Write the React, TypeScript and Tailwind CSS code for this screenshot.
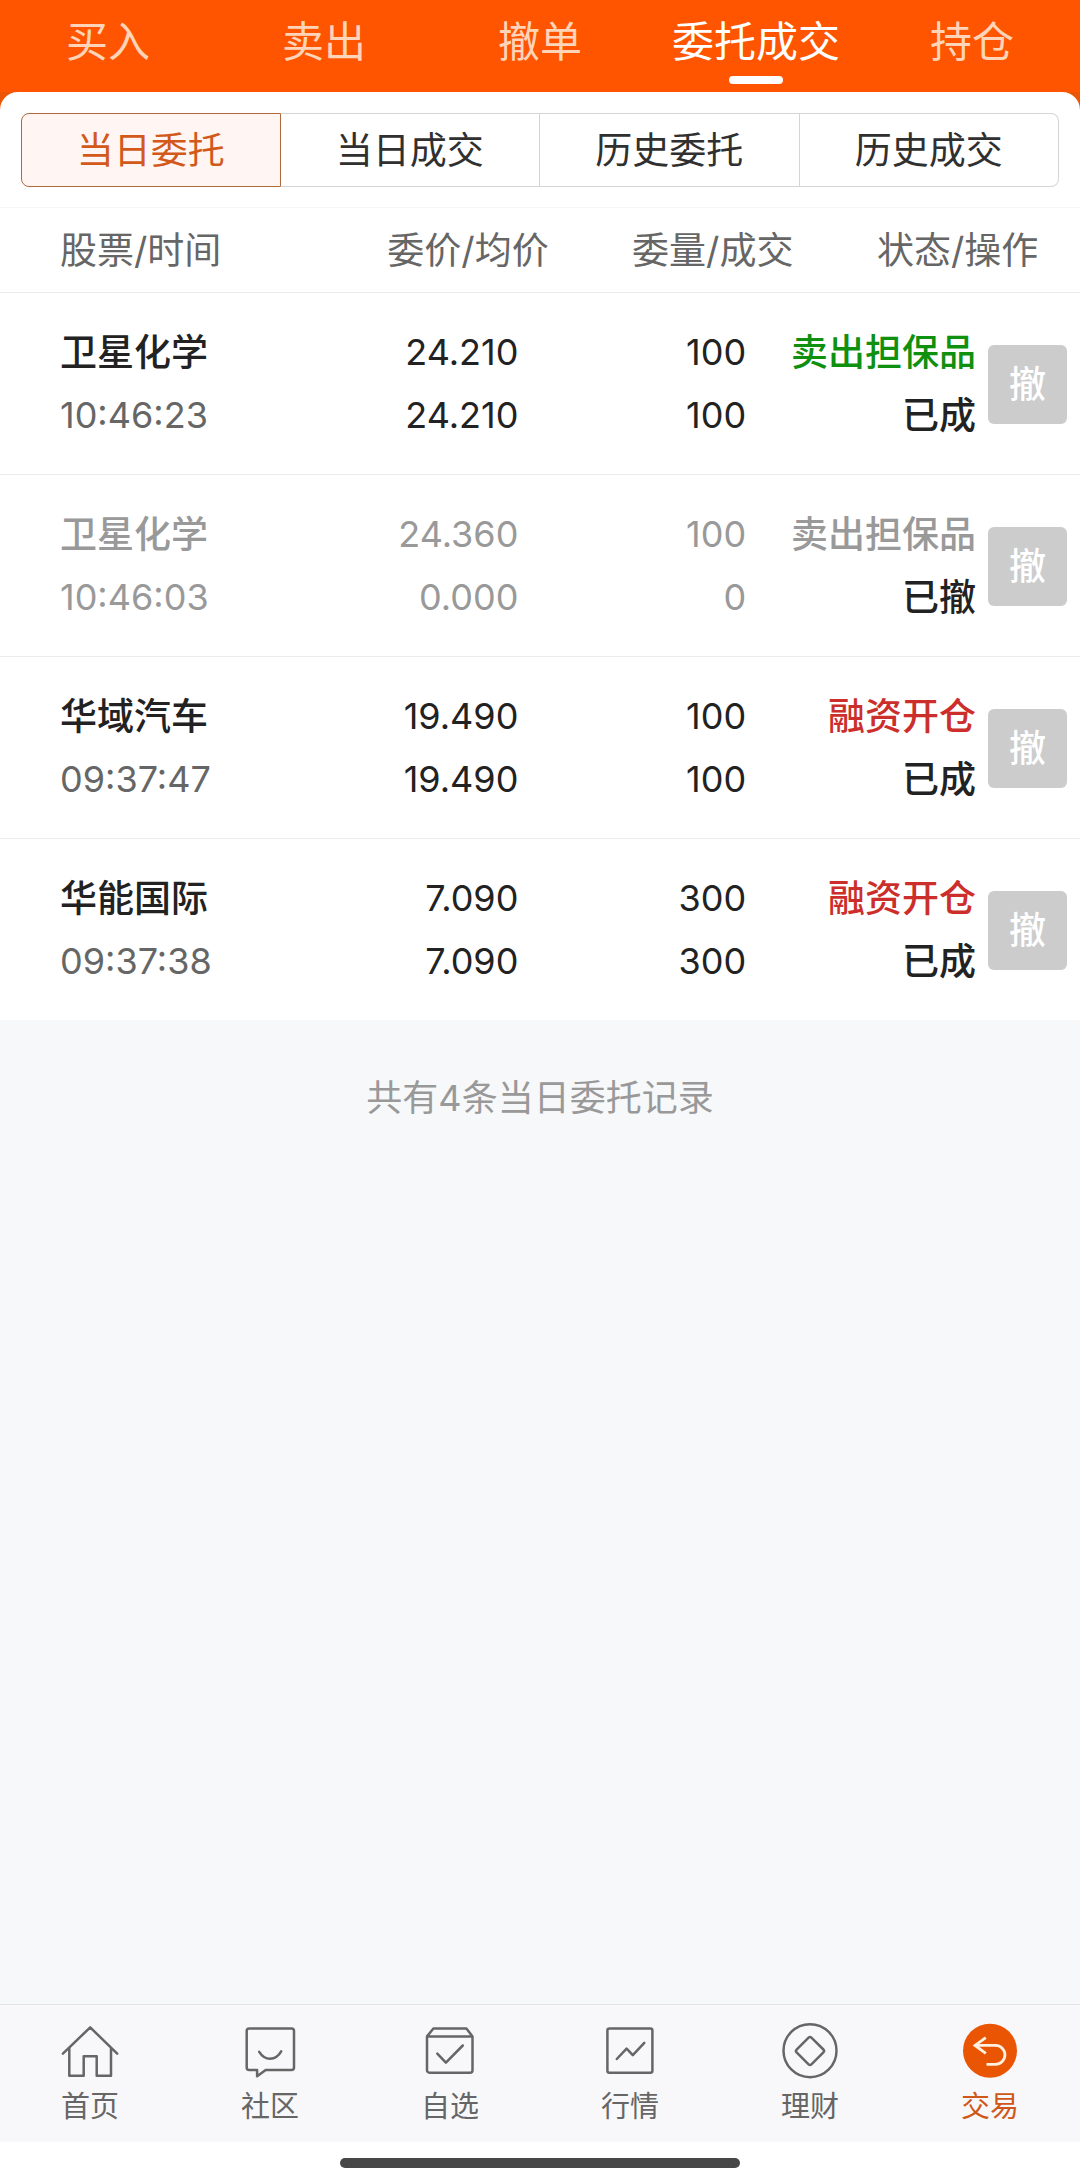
import { useState, type ReactNode } from "react";

const topTabs = ["买入", "卖出", "撤单", "委托成交", "持仓"];
const segments = ["当日委托", "当日成交", "历史委托", "历史成交"];
const columns = ["股票/时间", "委价/均价", "委量/成交", "状态/操作"];

type Order = {
  name: string;
  time: string;
  price: string;
  average: string;
  quantity: string;
  filled: string;
  action: string;
  status: string;
  tone: "sell" | "buy" | "cancelled";
};

const orders: Order[] = [
  { name: "卫星化学", time: "10:46:23", price: "24.210", average: "24.210", quantity: "100", filled: "100", action: "卖出担保品", status: "已成", tone: "sell" },
  { name: "卫星化学", time: "10:46:03", price: "24.360", average: "0.000", quantity: "100", filled: "0", action: "卖出担保品", status: "已撤", tone: "cancelled" },
  { name: "华域汽车", time: "09:37:47", price: "19.490", average: "19.490", quantity: "100", filled: "100", action: "融资开仓", status: "已成", tone: "buy" },
  { name: "华能国际", time: "09:37:38", price: "7.090", average: "7.090", quantity: "300", filled: "300", action: "融资开仓", status: "已成", tone: "buy" },
];

const actionColor = {
  sell: "text-[#0f900f]",
  buy: "text-[#cc2f2b]",
  cancelled: "text-[#999999]",
};

function Icon({ children }: { children: ReactNode }) {
  return (
    <svg viewBox="0 0 60 60" className="size-[60px]" fill="none" stroke="currentColor" strokeWidth="2.5" strokeLinecap="round" strokeLinejoin="round" aria-hidden="true">
      {children}
    </svg>
  );
}

const navItems = [
  {
    label: "首页",
    icon: (
      <Icon>
        <path d="M2.9 32.6 30.2 6.4 57.2 32.6M9.3 27v27.8h14.4V35.3h13v19.5H51V27" />
      </Icon>
    ),
  },
  {
    label: "社区",
    icon: (
      <Icon>
        <path d="M9.2 7.4h42.3a2.5 2.5 0 0 1 2.5 2.5v36.6a2.5 2.5 0 0 1-2.5 2.5H25.7l-8.6 6.2V49H9.2a2.5 2.5 0 0 1-2.5-2.5V9.9a2.5 2.5 0 0 1 2.5-2.5Z" />
        <path d="M19.2 30.8C22 35.3 25.5 37.7 30.1 37.7S38.4 35.3 41.2 30.4" />
      </Icon>
    ),
  },
  {
    label: "自选",
    icon: (
      <Icon>
        <path d="M7 15.4 13.4 7.5h33l6.1 7.9v33.8a2.5 2.5 0 0 1-2.5 2.5H9.5A2.5 2.5 0 0 1 7 49.2ZM7 15.4h45.5" />
        <path d="m17.3 32.7 8.6 8.9 16.9-17.1" />
      </Icon>
    ),
  },
  {
    label: "行情",
    icon: (
      <Icon>
        <rect x="7.4" y="7.4" width="45" height="44.3" rx="2" />
        <path d="m16.8 38 9.8-10.3 6.2 6.4 11.5-12.3" />
      </Icon>
    ),
  },
  {
    label: "理财",
    icon: (
      <Icon>
        <circle cx="30" cy="29.7" r="26.5" />
        <path d="M28.6 16.7a2 2 0 0 1 2.8 0l12 11.8a2 2 0 0 1 0 2.8l-12 12a2 2 0 0 1-2.8 0l-12-12a2 2 0 0 1 0-2.8Z" />
      </Icon>
    ),
  },
  {
    label: "交易",
    icon: (
      <Icon>
        <circle cx="30" cy="29.7" r="27" fill="#ea5504" stroke="none" />
        <path d="M25.8 16.6 15 24.4l10.8 8M15 24.4h20.5a9.45 9.45 0 0 1 0 18.9h-9" stroke="#fff0e0" strokeLinecap="butt" strokeLinejoin="miter" strokeWidth="2.8" />
      </Icon>
    ),
  },
];

export default function App() {
  const [topTab, setTopTab] = useState("委托成交");
  const [segment, setSegment] = useState("当日委托");
  const [nav, setNav] = useState("交易");

  return (
    <div className="flex min-h-screen flex-col bg-[#f7f8fa] font-[Inter,'Noto_Sans_CJK_SC',sans-serif] text-[#222222]">
      <header className="bg-[#ff5500]">
        <nav className="grid grid-cols-5" aria-label="交易功能">
          {topTabs.map((tab) => (
            <button
              key={tab}
              type="button"
              onClick={() => setTopTab(tab)}
              className={`relative pt-3 pb-5 text-[42px] leading-[60px] whitespace-nowrap ${tab === topTab ? "text-white" : "text-[#ffd4b8]"}`}
            >
              {tab}
              {tab === topTab && <span className="absolute bottom-2 left-1/2 h-2 w-[54px] -translate-x-1/2 rounded-full bg-white" />}
            </button>
          ))}
        </nav>
      </header>

      <main className="flex-1">
        <div className="bg-[#ec5505]">
          <div className="rounded-t-[18px] bg-white px-[21px] pt-[21px] pb-5">
            <div className="grid grid-cols-4">
              {segments.map((item) => (
                <button
                  key={item}
                  type="button"
                  onClick={() => setSegment(item)}
                  className={`border pt-[9px] pb-[7px] text-[37px] leading-14 whitespace-nowrap first:rounded-l-lg last:rounded-r-lg ${
                    item === segment ? "border-[#b0683c] bg-[#fff6f3] text-[#d2591a]" : "border-l-0 border-[#d3d6d8] bg-white text-[#303030]"
                  }`}
                >
                  {item}
                </button>
              ))}
            </div>
          </div>
        </div>

        <table className="w-full table-fixed border-collapse bg-white">
          <thead>
            <tr className="border-t border-b border-t-[#f5f5f5] border-b-[#ebebeb] text-[37px] leading-[82px] whitespace-nowrap text-[#666666]">
              {columns.map((column, index) => (
                <th key={column} scope="col" className={`px-0 pt-0.5 pb-0 font-normal ${index === 0 ? "w-[32%] pl-15 text-left" : "text-center"}`}>
                  {column}
                </th>
              ))}
            </tr>
          </thead>
          <tbody className="text-[36px] leading-[63px] whitespace-nowrap">
            {orders.map((order) => {
              const muted = order.tone === "cancelled";
              return (
                <tr key={order.time} className={`border-b border-[#ebebeb] last:border-b-0 ${muted ? "text-[#999999]" : ""}`}>
                  <td className="pt-7 pb-[27px] pl-15">
                    <div className="text-[37px] font-medium">{order.name}</div>
                    <div className={muted ? "" : "text-[#666666]"}>{order.time}</div>
                  </td>
                  <td className="pt-7 pb-[27px] pr-18 text-right">
                    <div>{order.price}</div>
                    <div>{order.average}</div>
                  </td>
                  <td className="pt-7 pb-[27px] pr-[89px] text-right">
                    <div>{order.quantity}</div>
                    <div>{order.filled}</div>
                  </td>
                  <td className="pt-7 pb-[27px] pr-[13px] text-[37px] font-medium">
                    <div className="flex items-center justify-end gap-3">
                      <div className="text-right">
                        <div className={actionColor[order.tone]}>{order.action}</div>
                        <div className="text-[#222222]">{order.status}</div>
                      </div>
                      <button type="button" disabled aria-label={`撤 ${order.name}`} className="size-[79px] shrink-0 rounded-md bg-[#cccccc] text-white">
                        撤
                      </button>
                    </div>
                  </td>
                </tr>
              );
            })}
          </tbody>
        </table>

        <p className="pt-[51px] text-center text-[36px] leading-[54px] text-[#999999]">共有{orders.length}条当日委托记录</p>
      </main>

      <footer>
        <nav className="grid grid-cols-6 border-t border-[#e2e3e5] bg-[#f8f8fa] pt-4 pb-[15px]" aria-label="主导航">
          {navItems.map((item) => (
            <button
              key={item.label}
              type="button"
              onClick={() => setNav(item.label)}
              className={`flex flex-col items-center gap-1.5 text-[29px] leading-10 ${item.label === nav ? "text-[#cf5719]" : "text-[#666666]"}`}
            >
              {item.icon}
              {item.label}
            </button>
          ))}
        </nav>
        <div className="flex justify-center bg-white py-4">
          <div className="h-[10px] w-[37%] rounded-full bg-[#474747]" />
        </div>
      </footer>
    </div>
  );
}
